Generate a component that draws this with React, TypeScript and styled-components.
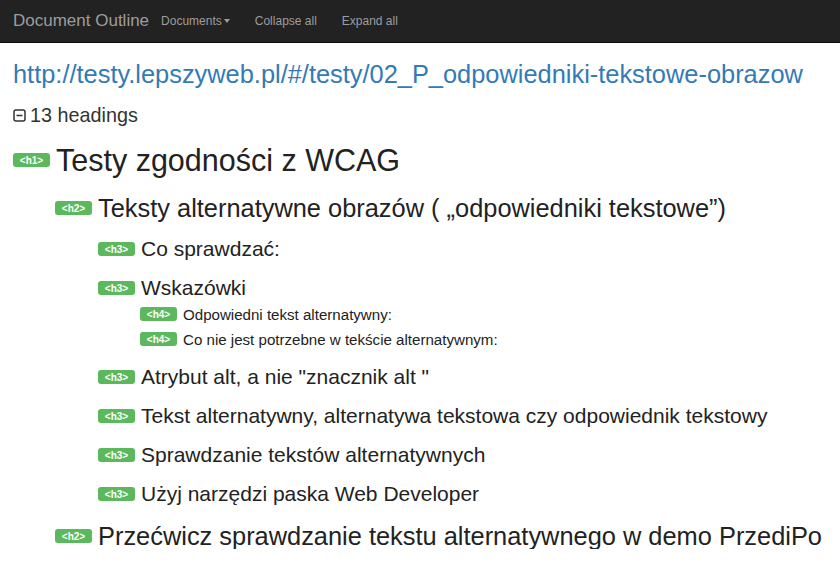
import React from "react";
import styled, { createGlobalStyle } from "styled-components";

const Global = createGlobalStyle`
  html, body { margin: 0; padding: 0; background: #fff; }
  body { font-family: "Liberation Sans", Arial, sans-serif; color: #333; }
`;

const NavBar = styled.nav`
  display: flex;
  align-items: center;
  height: 42px;
  background: #222;
  border-bottom: 1px solid #080808;
  padding: 0 13px;
`;

const Brand = styled.span`
  font-size: 17px;
  color: #9d9d9d;
  margin-right: 12px;
`;

const NavLink = styled.span`
  font-size: 12px;
  color: #9d9d9d;
  margin-right: 25px;
  display: inline-flex;
  align-items: center;
`;

const Caret = styled.span`
  display: inline-block;
  width: 0;
  height: 0;
  margin-left: 2px;
  border-top: 4px solid #9d9d9d;
  border-left: 3.5px solid transparent;
  border-right: 3.5px solid transparent;
`;

const Main = styled.main`
  padding: 0 13px;
`;

const Url = styled.a`
  display: block;
  margin-top: 16px;
  font-size: 25.4px;
  line-height: 30px;
  color: #337ab7;
  text-decoration: none;
  white-space: nowrap;
`;

const Count = styled.div`
  display: flex;
  align-items: center;
  gap: 4px;
  margin-top: 14px;
  font-size: 19.8px;
  line-height: 24px;
`;

type Level = 1 | 2 | 3 | 4;

const cfg: Record<Level, { font: number; line: number; mt: number; indent: number }> = {
  1: { font: 30.5, line: 34, mt: 16, indent: 0 },
  2: { font: 25.4, line: 26, mt: 18, indent: 42 },
  3: { font: 21, line: 22, mt: 17, indent: 85 },
  4: { font: 15.1, line: 20, mt: 5, indent: 127 },
};

const Row = styled.div<{ $level: Level }>`
  display: flex;
  align-items: center;
  gap: 6px;
  margin-top: ${(p) => cfg[p.$level].mt}px;
  padding-left: ${(p) => cfg[p.$level].indent}px;
  height: ${(p) => cfg[p.$level].line}px;
  font-size: ${(p) => cfg[p.$level].font}px;
  color: #222;
  white-space: nowrap;
`;

const Badge = styled.span`
  display: inline-flex;
  align-items: center;
  justify-content: center;
  width: 37px;
  height: 14px;
  border-radius: 3px;
  background: #5cb85c;
  color: #fff;
  font-size: 10px;
  font-weight: bold;
  flex: none;
`;

const items: [Level, string][] = [
  [1, "Testy zgodności z WCAG"],
  [2, "Teksty alternatywne obrazów ( „odpowiedniki tekstowe”)"],
  [3, "Co sprawdzać:"],
  [3, "Wskazówki"],
  [4, "Odpowiedni tekst alternatywny:"],
  [4, "Co nie jest potrzebne w tekście alternatywnym:"],
  [3, 'Atrybut alt, a nie "znacznik alt "'],
  [3, "Tekst alternatywny, alternatywa tekstowa czy odpowiednik tekstowy"],
  [3, "Sprawdzanie tekstów alternatywnych"],
  [3, "Użyj narzędzi paska Web Developer"],
  [2, "Przećwicz sprawdzanie tekstu alternatywnego w demo PrzediPo"],
];

export default function App() {
  return (
    <>
      <Global />
      <NavBar>
        <Brand>Document Outline</Brand>
        <NavLink>
          Documents
          <Caret />
        </NavLink>
        <NavLink>Collapse all</NavLink>
        <NavLink>Expand all</NavLink>
      </NavBar>
      <Main>
        <Url href="#">http://testy.lepszyweb.pl/#/testy/02_P_odpowiedniki-tekstowe-obrazow</Url>
        <Count>
          <svg width="13" height="13" viewBox="0 0 13 13">
            <rect x="1" y="1" width="11" height="11" rx="2" fill="none" stroke="#333" strokeWidth="1.5" />
            <line x1="3.5" y1="6.5" x2="9.5" y2="6.5" stroke="#333" strokeWidth="1.5" />
          </svg>
          13 headings
        </Count>
        {items.map(([lvl, text], i) => (
          <Row key={i} $level={lvl}>
            <Badge>{`<h${lvl}>`}</Badge>
            {text}
          </Row>
        ))}
      </Main>
    </>
  );
}
